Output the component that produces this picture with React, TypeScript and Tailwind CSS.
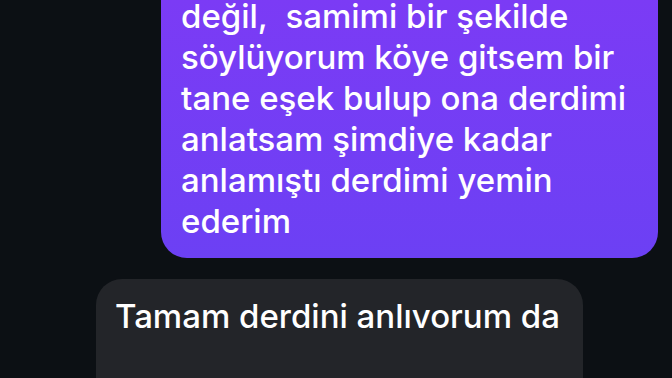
const font = { fontFamily: "Inter, 'Noto Sans', sans-serif" };

export default function App() {
  return (
    <main className="w-[672px] h-[378px] overflow-hidden bg-[#0c1014] text-white" style={font}>
      <div className="flex flex-col">
        {/* sent message, top is scrolled out of view */}
        <div className="flex justify-end pr-[14px]">
          <div className="w-[497px] rounded-b-[26px] bg-gradient-to-b from-[#7b3bf5] to-[#6c40f4] pl-[20px] pr-3 pb-[16px]">
            <p className="-mt-[4px] text-[33px] leading-[41px] font-medium">
              değil,&nbsp; samimi bir şekilde söylüyorum köye gitsem bir tane eşek bulup ona derdimi anlatsam şimdiye kadar anlamıştı derdimi yemin ederim
            </p>
          </div>
        </div>

        {/* received message */}
        <div className="mt-[21px] pl-[96px]">
          <div className="w-[487px] rounded-t-[26px] bg-[#232529] pl-[19px] pr-3 pt-[17px] pb-6">
            <p className="text-[33px] leading-[41px] font-medium">
              Tamam derdini anlıvorum da
            </p>
            <p className="mt-[4px] text-[33px] leading-[41px] font-medium">&nbsp;</p>
          </div>
        </div>
      </div>
    </main>
  );
}
